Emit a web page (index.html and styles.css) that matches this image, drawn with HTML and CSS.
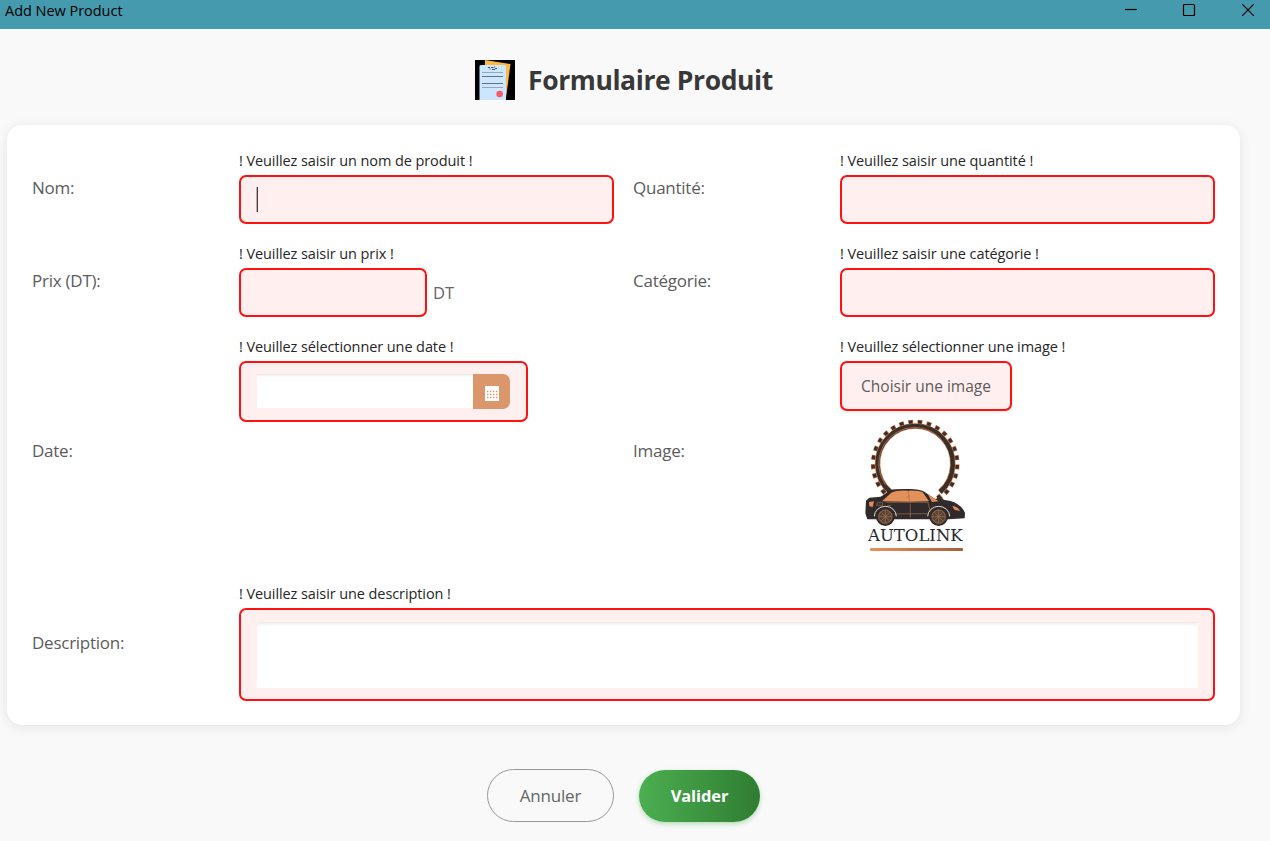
FILE: index.html
```html
<!DOCTYPE html>
<html lang="fr">
<head>
<meta charset="utf-8">
<title>Add New Product</title>
<link rel="stylesheet" href="styles.css">
</head>
<body>
<header class="titlebar">
  <span class="window-title">Add New Product</span>
  <div class="window-controls">
    <svg width="14" height="14" viewBox="0 0 14 14"><path d="M2 7.5H14" /></svg>
    <svg width="14" height="14" viewBox="0 0 14 14"><rect x="1.5" y="2.5" width="11" height="11" rx="1" /></svg>
    <svg width="14" height="14" viewBox="0 0 14 14"><path d="M1.2 2.2L12.8 13.8M12.8 2.2L1.2 13.8" /></svg>
  </div>
</header>
<main>
  <div class="heading">
    <svg class="doc-icon" width="40" height="40" viewBox="0 0 40 40">
      <rect width="40" height="40" fill="#000"/>
      <path d="M10 0L35.5 4L31 38L9 30Z" fill="#fdb947"/>
      <rect x="4.5" y="5" width="26.5" height="36" rx="1.5" fill="#cce6ff"/>
      <path d="M13 7.5h2M16 7.5h2.5M19 7h1M20 8.5h2M14.5 9h1M17 9.5h3" stroke="#46525f" stroke-width="1"/>
      <path d="M7 12.5H28M7 27.5H28" stroke="#94a8ba" stroke-width="1"/>
      <path d="M7 16.5H28M7 23.5H28" stroke="#627384" stroke-width="1"/>
      <circle cx="24.6" cy="34" r="3.3" fill="#fb5a5f"/>
    </svg>
    <h1>Formulaire Produit</h1>
  </div>
  <form class="card">
    <label class="label">Nom:</label>
    <div class="field">
      <span class="hint">! Veuillez saisir un nom de produit !</span>
      <div class="input"><span class="caret"></span></div>
    </div>
    <label class="label">Quantité:</label>
    <div class="field">
      <span class="hint">! Veuillez saisir une quantité !</span>
      <div class="input"></div>
    </div>

    <label class="label">Prix (DT):</label>
    <div class="field">
      <span class="hint">! Veuillez saisir un prix !</span>
      <div class="price"><div class="input"></div><span class="unit">DT</span></div>
    </div>
    <label class="label">Catégorie:</label>
    <div class="field">
      <span class="hint">! Veuillez saisir une catégorie !</span>
      <div class="input"></div>
    </div>

    <label class="label">Date:</label>
    <div class="field">
      <span class="hint">! Veuillez sélectionner une date !</span>
      <div class="input date">
        <div class="date-text"></div>
        <div class="date-button">
          <svg width="14" height="15" viewBox="0 0 14 15">
            <rect width="14" height="15" fill="#fff"/>
            <path d="M2 5.5H13M2 8.5H13M2 11.5H13" stroke="#dc966c" stroke-width="1.4" stroke-dasharray="1.4 1.6"/>
          </svg>
        </div>
      </div>
    </div>
    <label class="label">Image:</label>
    <div class="field">
      <span class="hint">! Veuillez sélectionner une image !</span>
      <button type="button" class="choose">Choisir une image</button>
      <svg class="logo" width="130" height="150" viewBox="0 0 390 450">
        <defs>
          <linearGradient id="bar"><stop offset="0" stop-color="#e89258"/><stop offset="1" stop-color="#a95e3e"/></linearGradient>
        </defs>
        <g fill="none">
          <path d="M128 266A124 124 0 1 1 263 266" stroke="#d98353" stroke-width="18" stroke-dasharray="15 12"/>
          <path d="M128 266A124 124 0 1 1 263 266" stroke="#39302c" stroke-width="15" stroke-dasharray="11 16" stroke-dashoffset="-2"/>
          <path d="M121 246A113 113 0 1 1 270 246" stroke="#d98353" stroke-width="17"/>
          <path d="M121 246A113 113 0 1 1 270 246" stroke="#39302c" stroke-width="13"/>
          <path d="M106 224A109 109 0 0 1 195 52Q250 54 282 98" stroke="#d98353" stroke-width="2"/>
          <path d="M262 262L285 278" stroke="#39302c" stroke-width="11"/>
        </g>
        <path d="M48 272L58 263L92 260L122 240Q132 236 180 237Q208 237 223 245L254 266L299 272Q335 282 345 309L344 325L296 328H52L46 310Z" fill="#302b2a"/>
        <path d="M96 274L124 248Q142 240 173 242H178Q207 241 218 247L237 274L180 275Z" fill="#e39159"/>
        <path d="M233 252L266 274L246 276ZM57 276L72 274L68 291L58 289ZM307 288Q323 289 330 303L313 299Z" fill="#df8c58"/>
        <path d="M82 278H98V286H80ZM112 286H124M181 281V323M112 312L232 311M234 278L243 315M108 277H235M174 243L179 275M170 263L180 256" fill="none" stroke="#a17051" stroke-width="2"/>
        <path d="M73 319A33 30 0 0 1 139 319M233 319A33 30 0 0 1 299 319" fill="none" stroke="#e4d8cf" stroke-width="3"/>
        <g fill="#574235" stroke="#302b2a" stroke-width="6"><circle cx="106" cy="320" r="25"/><circle cx="266" cy="320" r="25"/></g>
        <g fill="none" stroke="#a57352" stroke-width="2"><circle cx="106" cy="320" r="20"/><circle cx="266" cy="320" r="20"/><path d="M106 301V339M87 320H125M93 307L119 333M119 307L93 333M266 301V339M247 320H285M253 307L279 333M279 307L253 333"/></g>
        <text class="logo-name" x="54" y="392" textLength="284" lengthAdjust="spacingAndGlyphs">AUTOLINK</text>
        <rect x="60" y="414" width="279" height="9" rx="3" fill="url(#bar)"/>
      </svg>
    </div>

    <label class="label">Description:</label>
    <div class="field wide">
      <span class="hint">! Veuillez saisir une description !</span>
      <div class="input area"><div class="area-text"></div></div>
    </div>
  </form>
  <div class="actions">
    <button type="button" class="cancel">Annuler</button>
    <button type="button" class="submit">Valider</button>
  </div>
</main>
</body>
</html>
```
FILE: styles.css
```css
* { box-sizing: border-box; }
body {
  margin: 0;
  height: 841px;
  overflow: hidden;
  background: #f9f9f9;
  font-family: "Open Sans", "Noto Sans", sans-serif;
  color: #5c5c5c;
}
button { font-family: inherit; margin: 0; padding: 0; }
.titlebar {
  height: 29px;
  padding: 0 15px 0 5px;
  display: flex;
  justify-content: space-between;
  background: #459bad;
  color: #000;
}
.window-title { font-size: 14.5px; line-height: 22px; letter-spacing: -0.03px; }
.window-controls { display: flex; gap: 45px; padding-top: 2px; }
.window-controls svg { fill: none; stroke: #000; stroke-width: 1.2; }
.heading {
  display: flex;
  gap: 13px;
  height: 96px;
  padding: 31px 0 0 475px;
}
h1 {
  margin: 0;
  color: #383838;
  font-size: 26.5px;
  line-height: 40px;
  font-weight: 700;
  letter-spacing: -0.4px;
  white-space: nowrap;
}
.card {
  display: grid;
  grid-template-columns: 188px 375px 188px 375px;
  grid-template-rows: 74px 74px 228px 118px;
  gap: 19px;
  width: 1233px;
  height: 600px;
  margin-left: 7px;
  padding: 25px 25px 24px;
  background: #fff;
  border-radius: 15px;
  box-shadow: 0 2px 12px rgba(0, 0, 0, 0.09);
}
.label {
  align-self: center;
  padding-top: 1px;
  font-size: 17px;
  line-height: 24px;
  letter-spacing: -0.25px;
}
.field { display: flex; flex-direction: column; align-items: flex-start; }
.wide { grid-column: span 3; align-items: stretch; }
.hint {
  height: 25px;
  line-height: 21px;
  font-size: 14.5px;
  letter-spacing: -0.09px;
  color: #262626;
  white-space: nowrap;
}
.input {
  width: 100%;
  height: 49px;
  border: 2px solid #f11;
  border-radius: 7px;
  background: #ffefee;
}
.caret { display: block; width: 2px; height: 25px; margin: 10px 0 0 15px; background: linear-gradient(90deg, #b9adad 50%, #444 50%); }
.price { display: flex; align-items: center; gap: 6px; }
.price .input { width: 188px; }
.unit { font-size: 16.5px; color: #666; }
.date { display: flex; width: 289px; height: 61px; padding: 11px 16px; }
.date-text { width: 216px; height: 34px; background: #fff; box-shadow: inset 0 3px 3px -2px #dde1e0; }
.date-button {
  display: flex;
  width: 37px;
  height: 35px;
  padding: 12px 0 0 12px;
  background: #dc966c;
  border-radius: 0 7px 7px 0;
}
.choose {
  flex: none;
  width: 172px;
  height: 50px;
  border: 2px solid #f11;
  border-radius: 7px;
  background: #ffefee;
  color: #5c5c5c;
  font-size: 15.5px;
  box-shadow: 0 1px 3px rgba(0, 0, 0, 0.1);
}
.logo { flex: none; margin: -1px 0 0 10px; }
.logo-name { font-family: "DejaVu Serif", serif; font-size: 51px; fill: #25282c; }
.area { height: 93px; padding: 12px 15px 11px 16px; }
.area-text { height: 66px; background: #fff; border-radius: 2px; box-shadow: inset 0 4px 4px -3px #dde1e0; }
.actions { display: flex; align-items: center; gap: 25px; padding: 44px 0 0 487px; }
.cancel {
  width: 127px;
  height: 53px;
  border: 1px solid #999;
  border-radius: 27px;
  background: transparent;
  color: #666;
  font-size: 17px;
  letter-spacing: -0.2px;
}
.submit {
  width: 121px;
  height: 52px;
  margin-top: 1px;
  padding-bottom: 2px;
  border: 0;
  border-radius: 26px;
  background: linear-gradient(90deg, #4caf50, #2e7d32);
  color: #fff;
  font-size: 16.5px;
  font-weight: 700;
  letter-spacing: -0.1px;
  box-shadow: 0 2px 5px rgba(76, 175, 80, 0.4);
}
```
